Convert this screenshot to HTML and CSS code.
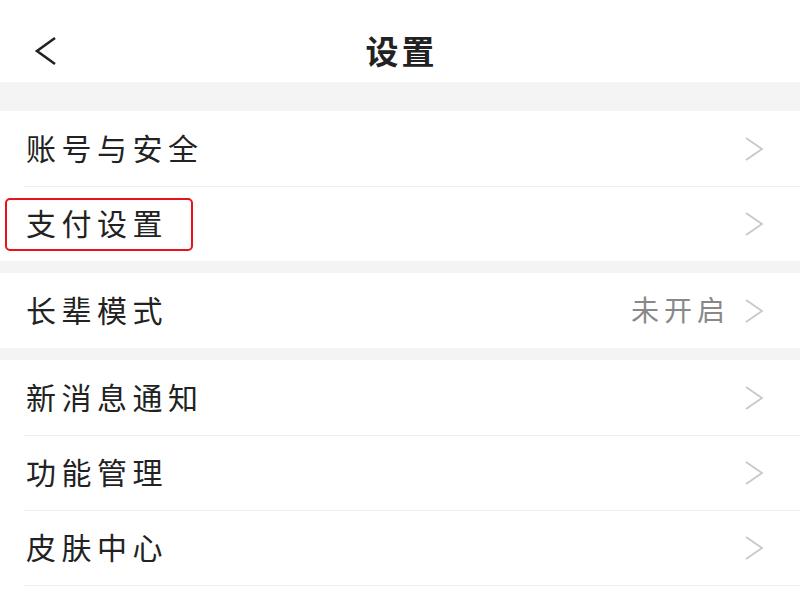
FILE: index.html
```html
<!DOCTYPE html>
<html lang="zh-CN">
<head>
<meta charset="utf-8">
<title>设置</title>
<link rel="stylesheet" href="styles.css">
</head>
<body>
<div class="page">
  <header class="header">
    <svg class="back" width="24" height="30" viewBox="0 0 24 30" aria-hidden="true">
      <polyline points="21,2 3,15 21,28" fill="none" stroke="#222" stroke-width="2.6" stroke-linejoin="miter"/>
    </svg>
    <h1 class="title">设置</h1>
  </header>

  <div class="gap gap-top"></div>
  <section class="group">
    <div class="row"><span class="label">账号与安全</span><span class="right"><svg class="chev" width="20" height="26" viewBox="0 0 20 26"><polyline points="2,2 18,13 2,24" fill="none" stroke="#c8c8c8" stroke-width="1.8"/></svg></span></div>
    <div class="row highlighted"><span class="label">支付设置</span><span class="right"><svg class="chev" width="20" height="26" viewBox="0 0 20 26"><polyline points="2,2 18,13 2,24" fill="none" stroke="#c8c8c8" stroke-width="1.8"/></svg></span><span class="mark"></span></div>
  </section>

  <div class="gap"></div>
  <section class="group">
    <div class="row"><span class="label">长辈模式</span><span class="right"><span class="value">未开启</span><svg class="chev" width="20" height="26" viewBox="0 0 20 26"><polyline points="2,2 18,13 2,24" fill="none" stroke="#c8c8c8" stroke-width="1.8"/></svg></span></div>
  </section>

  <div class="gap"></div>
  <section class="group">
    <div class="row"><span class="label">新消息通知</span><span class="right"><svg class="chev" width="20" height="26" viewBox="0 0 20 26"><polyline points="2,2 18,13 2,24" fill="none" stroke="#c8c8c8" stroke-width="1.8"/></svg></span></div>
    <div class="row"><span class="label">功能管理</span><span class="right"><svg class="chev" width="20" height="26" viewBox="0 0 20 26"><polyline points="2,2 18,13 2,24" fill="none" stroke="#c8c8c8" stroke-width="1.8"/></svg></span></div>
    <div class="row"><span class="label">皮肤中心</span><span class="right"><svg class="chev" width="20" height="26" viewBox="0 0 20 26"><polyline points="2,2 18,13 2,24" fill="none" stroke="#c8c8c8" stroke-width="1.8"/></svg></span></div>
    <div class="row row-cut"></div>
  </section>
</div>
</body>
</html>
```

FILE: styles.css
```css
* { box-sizing: border-box; margin: 0; padding: 0; }

html, body {
  width: 800px;
  height: 600px;
  overflow: hidden;
  background: #ffffff;
}

body {
  font-family: "Noto Sans CJK SC", "Noto Sans", sans-serif;
  color: #222222;
}

.page {
  display: flex;
  flex-direction: column;
}

.header {
  height: 82px;
  padding-top: 18px;
  display: flex;
  align-items: center;
  justify-content: center;
  position: relative;
  background: #ffffff;
}

.back {
  position: absolute;
  left: 34px;
  top: 36px;
}

.title {
  font-size: 33px;
  font-weight: 700;
  letter-spacing: 3px;
  margin-left: 3px;
  line-height: 1;
  color: #222222;
}

.gap {
  height: 12px;
  background: #f4f4f4;
}

.gap-top {
  height: 29px;
}

.group {
  background: #ffffff;
}

.row {
  height: 75px;
  padding-left: 26px;
  padding-right: 36px;
  display: flex;
  align-items: center;
  justify-content: space-between;
  position: relative;
}

.row-cut {
  height: 15px;
}

.row + .row::before {
  content: "";
  position: absolute;
  left: 24px;
  right: 0;
  top: 0;
  height: 1px;
  background: #eeeeee;
}

.label {
  font-size: 30px;
  letter-spacing: 5.5px;
  line-height: 1;
  margin-top: -3px;
  color: #222222;
}

.right {
  display: flex;
  align-items: center;
  gap: 14px;
}

.value {
  font-size: 28px;
  letter-spacing: 5px;
  line-height: 1;
  margin-top: -3px;
  color: #888888;
}

.chev {
  display: block;
}

.mark {
  position: absolute;
  left: 5px;
  top: 12px;
  width: 188px;
  height: 53px;
  border: 2.5px solid #e8121a;
  border-radius: 5px;
}
```
